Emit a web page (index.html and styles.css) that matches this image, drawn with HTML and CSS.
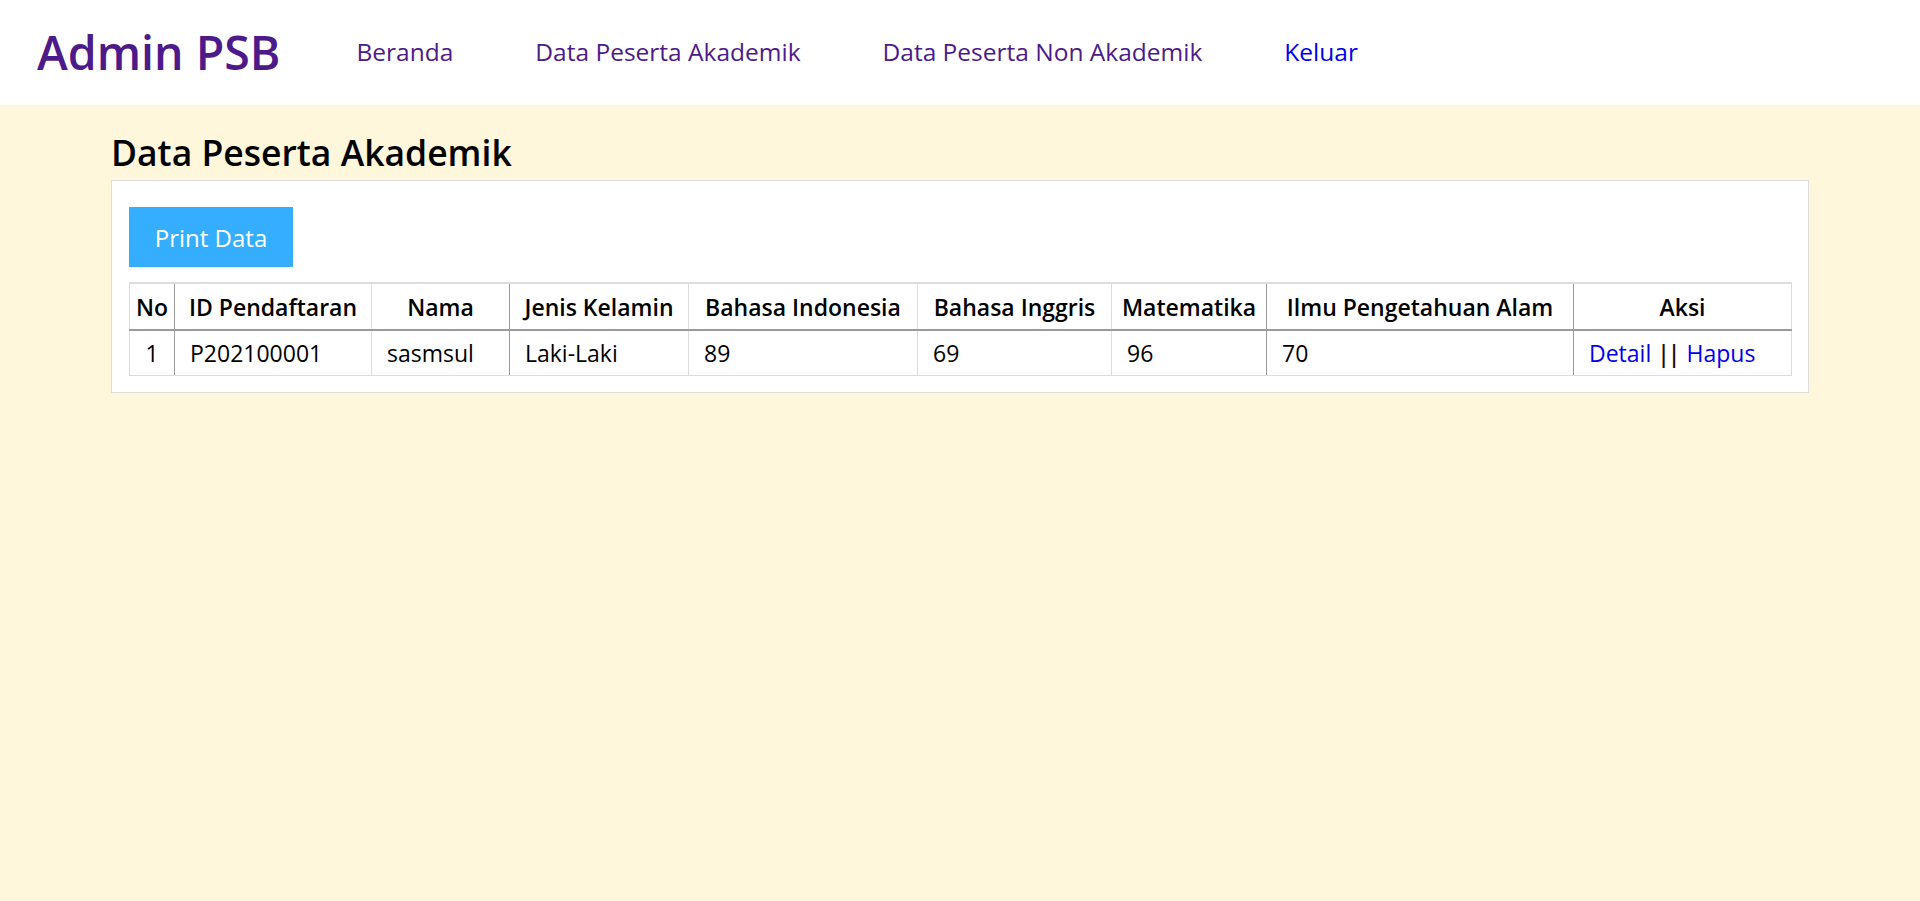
FILE: index.html
```html
<!DOCTYPE html>
<html lang="id">
<head>
<meta charset="utf-8">
<title>Admin PSB</title>
<link rel="stylesheet" href="styles.css">
</head>
<body>
<header class="topbar">
  <a class="brand" href="#">Admin PSB</a>
  <nav class="menu">
    <a class="menu-link" href="#">Beranda</a>
    <a class="menu-link" href="#">Data Peserta Akademik</a>
    <a class="menu-link" href="#">Data Peserta Non Akademik</a>
    <a class="menu-link menu-link-out" href="#">Keluar</a>
  </nav>
</header>
<main class="content">
  <h2 class="page-title">Data Peserta Akademik</h2>
  <section class="card">
    <button class="btn-print" type="button">Print Data</button>
    <table class="grid">
      <colgroup>
        <col class="c-no"><col class="c-id"><col class="c-nama"><col class="c-jk"><col class="c-bi"><col class="c-bing"><col class="c-mat"><col class="c-ipa"><col class="c-aksi">
      </colgroup>
      <thead>
        <tr>
          <th>No</th>
          <th>ID Pendaftaran</th>
          <th>Nama</th>
          <th>Jenis Kelamin</th>
          <th>Bahasa Indonesia</th>
          <th>Bahasa Inggris</th>
          <th>Matematika</th>
          <th>Ilmu Pengetahuan Alam</th>
          <th>Aksi</th>
        </tr>
      </thead>
      <tbody>
        <tr>
          <td class="num">1</td>
          <td>P202100001</td>
          <td>sasmsul</td>
          <td>Laki-Laki</td>
          <td>89</td>
          <td>69</td>
          <td>96</td>
          <td>70</td>
          <td><a class="act" href="#">Detail</a> <span class="bar">||</span> <a class="act" href="#">Hapus</a></td>
        </tr>
      </tbody>
    </table>
  </section>
</main>
</body>
</html>
```

FILE: styles.css
```css
html, body {
  margin: 0;
  padding: 0;
}

body {
  background: #fff7db;
  font-family: "Open Sans", "Noto Sans", sans-serif;
  color: #000;
  min-height: 901px;
}

.topbar {
  background: #ffffff;
  height: 105px;
  display: flex;
  align-items: center;
  padding-left: 37px;
  box-sizing: border-box;
}

.brand {
  font-size: 46.5px;
  font-weight: 600;
  color: #4d1a8a;
  text-decoration: none;
  margin-right: 76px;
  line-height: 1;
}

.menu {
  display: flex;
  gap: 82px;
  align-items: center;
}

.menu-link {
  font-size: 24.5px;
  color: #4d1a8a;
  text-decoration: none;
  line-height: 1;
}

.menu-link-out {
  color: #0000ee;
}

.content {
  padding: 25px 111px 0;
}

.page-title {
  margin: 0 0 6px;
  font-size: 35.5px;
  font-weight: 600;
  line-height: 44px;
}

.card {
  background: #ffffff;
  border: 1px solid #dcdcdc;
  padding: 26px 17px 16px;
}

.btn-print {
  display: block;
  width: 164px;
  height: 60px;
  background: #35aeff;
  color: #ffffff;
  border: none;
  font-family: inherit;
  font-size: 24px;
  margin: 0 0 15px;
  padding: 0;
}

.grid {
  width: 100%;
  border-collapse: collapse;
  table-layout: fixed;
  border-top: 2px solid #dcdcdc;
  font-size: 23px;
}

.c-no { width: 45px; }
.c-id { width: 197px; }
.c-nama { width: 138px; }
.c-jk { width: 179px; }
.c-bi { width: 229px; }
.c-bing { width: 194px; }
.c-mat { width: 155px; }
.c-ipa { width: 307px; }
.c-aksi { width: 218px; }

.grid th,
.grid td {
  border: 1px solid #dcdcdc;
  height: 44px;
  padding: 0 15px;
  white-space: nowrap;
  overflow: visible;
  vertical-align: middle;
}

.grid th {
  font-weight: 600;
  text-align: center;
  padding: 0 4px;
  height: 45px;
  border-bottom: 2px solid #9a9a9a;
}

.grid td {
  text-align: left;
  font-weight: 400;
}

.grid th:nth-child(1), .grid td:nth-child(1),
.grid th:nth-child(3), .grid td:nth-child(3),
.grid th:nth-child(7), .grid td:nth-child(7),
.grid th:nth-child(8), .grid td:nth-child(8) {
  border-right-color: #9a9a9a;
}

.grid td.num {
  text-align: center;
  padding: 0;
}

.act {
  color: #0000ee;
  text-decoration: none;
}

.bar {
  color: #1a0a00;
  font-weight: 600;
  letter-spacing: -2px;
  margin-right: 2px;
}
```
